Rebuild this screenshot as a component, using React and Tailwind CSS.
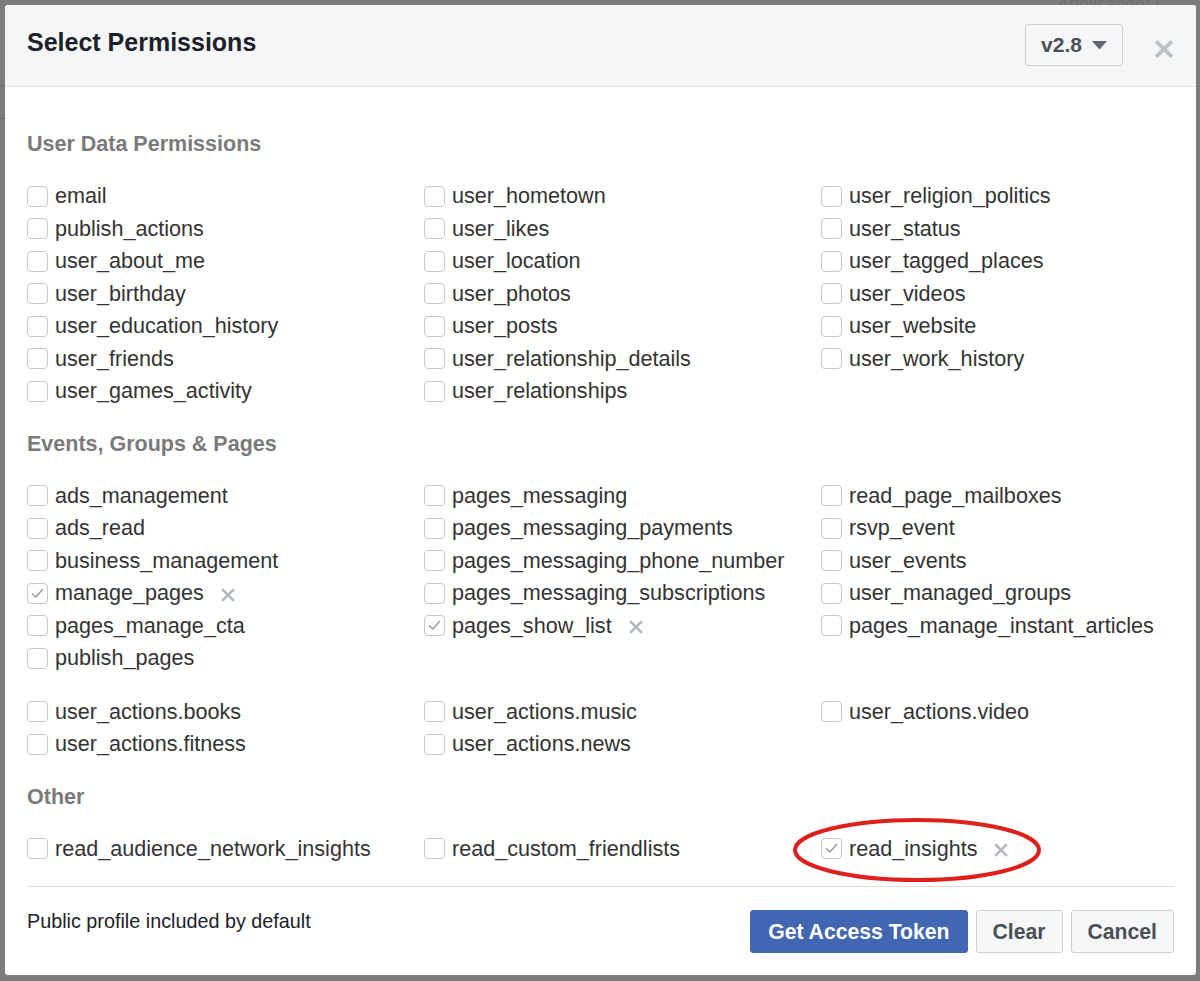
import React from "react";

const FONT = { fontFamily: '"Liberation Sans", Arial, Helvetica, sans-serif' };

function Check({ checked }) {
  return (
    <span className="flex h-[21px] w-[21px] shrink-0 items-center justify-center rounded-[4px] border border-[#c4c7cc] bg-white">
      {checked && (
        <svg width="13" height="11" viewBox="0 0 13 11" fill="none">
          <path d="M1.5 5.8 L4.8 9 L11.5 1.5" stroke="#9a9da3" strokeWidth="1.6" strokeLinecap="round" strokeLinejoin="round" />
        </svg>
      )}
    </span>
  );
}

function XMark({ size = 13, color = "#b5b8bd", stroke = 2.6 }) {
  return (
    <svg width={size} height={size} viewBox="0 0 14 14" fill="none">
      <path d="M2 2 L12 12 M12 2 L2 12" stroke={color} strokeWidth={stroke} strokeLinecap="square" />
    </svg>
  );
}

function Item({ label, checked, circled }) {
  if (!label) return <div className="h-[32.5px]" />;
  return (
    <div className="relative flex h-[32.5px] items-center">
      <Check checked={checked} />
      <span className="ml-[7px] text-[21.6px] leading-none text-[#333]">{label}</span>
      {checked && (
        <span className="ml-[17px] mt-[3px] flex items-center">
          <XMark size={14} />
        </span>
      )}
      {circled && (
        <svg className="pointer-events-none absolute left-[-29px] top-[-16px]" width="250" height="66" viewBox="0 0 250 66">
          <ellipse cx="125" cy="33" rx="122" ry="30" fill="none" stroke="#de1f1c" strokeWidth="4" />
        </svg>
      )}
    </div>
  );
}

function Grid({ cols }) {
  const rows = Math.max(...cols.map((c) => c.length));
  const cells = [];
  for (let r = 0; r < rows; r++) {
    for (let c = 0; c < 3; c++) {
      const it = cols[c][r];
      cells.push(<Item key={r + "-" + c} {...(it || {})} />);
    }
  }
  return <div className="mb-[21px] grid grid-cols-[397px_397px_1fr]">{cells}</div>;
}

const L = (arr) => arr.map((a) => (typeof a === "string" ? { label: a } : a));

function Heading({ children }) {
  return <div className="mb-[21px] h-[30px] text-[21.5px] font-bold leading-[30px] text-[#7a7a7a]">{children}</div>;
}

export default function App() {
  return (
    <div className="relative h-[981px] w-[1200px] overflow-hidden bg-[#7c7c7c] p-[5px]" style={FONT}>
      <div className="pointer-events-none absolute right-[40px] top-[-6px] text-[18px] leading-[20px] text-[#6f6f6f]">Application: [</div>
      <div className="pointer-events-none absolute left-0 top-[85px] h-px w-[6px] bg-[#666]" />
      <div className="pointer-events-none absolute left-0 top-[118px] h-px w-[6px] bg-[#666]" />
      <div className="relative flex h-[970px] w-[1191px] flex-col overflow-hidden rounded-[3px] bg-white">
        <div className="flex h-[82px] items-start border-b border-[#e5e5e5] bg-[#f5f6f7] pl-[22px] pr-[23px]">
          <div className="pt-[22px] text-[25px] font-bold leading-[30px] text-[#1d2129]">Select Permissions</div>
          <div className="ml-auto mt-[19px] flex h-[42px] w-[98px] items-center justify-center gap-[10px] rounded-[3px] border border-[#ced0d4] bg-[#f6f7f9]">
            <span className="text-[21px] font-bold text-[#4b4f56]">v2.8</span>
            <svg width="15" height="9" viewBox="0 0 15 9">
              <path d="M0 0 L15 0 L7.5 8.5 Z" fill="#606770" />
            </svg>
          </div>
          <div className="ml-[32px] mt-[35px] flex h-[18px] w-[18px] items-center justify-center">
            <XMark size={18} color="#bec2c9" stroke={3} />
          </div>
        </div>

        <div className="px-[22px] pt-[42px]">
          <Heading>User Data Permissions</Heading>
          <Grid
            cols={[
              L(["email", "publish_actions", "user_about_me", "user_birthday", "user_education_history", "user_friends", "user_games_activity"]),
              L(["user_hometown", "user_likes", "user_location", "user_photos", "user_posts", "user_relationship_details", "user_relationships"]),
              L(["user_religion_politics", "user_status", "user_tagged_places", "user_videos", "user_website", "user_work_history"]),
            ]}
          />
          <Heading>Events, Groups &amp; Pages</Heading>
          <Grid
            cols={[
              L(["ads_management", "ads_read", "business_management", { label: "manage_pages", checked: true }, "pages_manage_cta", "publish_pages"]),
              L(["pages_messaging", "pages_messaging_payments", "pages_messaging_phone_number", "pages_messaging_subscriptions", { label: "pages_show_list", checked: true }]),
              L(["read_page_mailboxes", "rsvp_event", "user_events", "user_managed_groups", "pages_manage_instant_articles"]),
            ]}
          />
          <Grid
            cols={[
              L(["user_actions.books", "user_actions.fitness"]),
              L(["user_actions.music", "user_actions.news"]),
              L(["user_actions.video"]),
            ]}
          />
          <Heading>Other</Heading>
          <Grid
            cols={[
              L(["read_audience_network_insights"]),
              L(["read_custom_friendlists"]),
              L([{ label: "read_insights", checked: true, circled: true }]),
            ]}
          />
          <div className="h-px bg-[#dddfe2]" />
          <div className="flex items-start">
            <div className="pt-[22px] text-[19.8px] leading-[24px] text-[#1d2129]">Public profile included by default</div>
            <div className="ml-auto mt-[23px] flex gap-[8px]">
              <button className="h-[43px] rounded-[3px] border border-[#4267b2] bg-[#4267b2] px-[17px] text-[21.2px] font-bold text-white">Get Access Token</button>
              <button className="h-[43px] rounded-[3px] border border-[#ced0d4] bg-[#f6f7f9] px-[16px] text-[21.2px] font-bold text-[#4b4f56]">Clear</button>
              <button className="h-[43px] rounded-[3px] border border-[#ced0d4] bg-[#f6f7f9] px-[16px] text-[21.2px] font-bold text-[#4b4f56]">Cancel</button>
            </div>
          </div>
        </div>
      </div>
    </div>
  );
}
